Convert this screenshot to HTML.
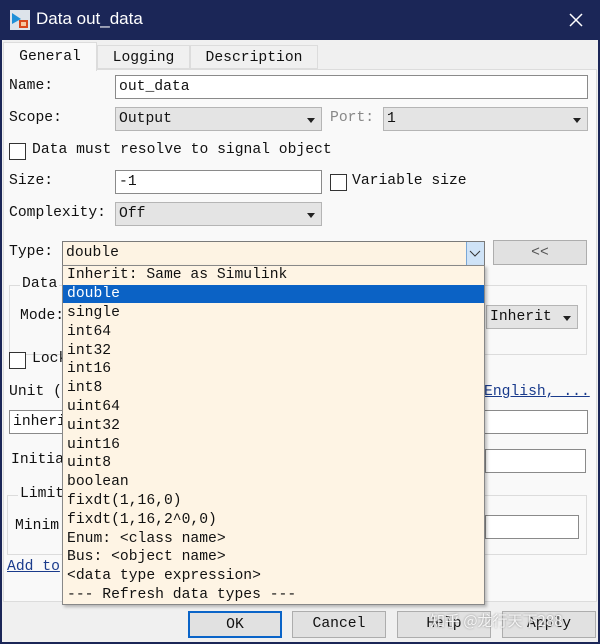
<!DOCTYPE html>
<html><head><meta charset="utf-8"><style>
*{box-sizing:border-box;margin:0;padding:0}
body{width:600px;height:644px;overflow:hidden;background:#f0f0f0;font-family:"Liberation Mono","Noto Sans CJK SC",monospace;font-size:14.7px;color:#111;position:relative}
.a{position:absolute;white-space:nowrap}
.title{left:0;top:0;width:600px;height:40px;background:#1b2657;color:#fff;font-family:"Liberation Sans",sans-serif;font-size:17px}
.inp{background:#fff;border:1px solid #8a8a8a;height:24px;padding:2px 3px;line-height:19px}
.dd{background:#e4e4e4;border:1px solid #b5b5b5;height:24px;padding:2px 3px;line-height:19px}
.dd:after{content:"";position:absolute;right:6px;top:10px;border:4px solid transparent;border-top:5px solid #222;border-bottom:0}
.cb{width:17px;height:17px;border:1px solid #333;background:#fff}
.grp{border:1px solid #dcdcdc}
.btn{background:#e1e1e1;border:1px solid #adadad;height:27px;text-align:center;line-height:24px}
.li{position:absolute;left:4px;height:19px;line-height:18px}
</style></head><body>
<div class="a title">
 <svg class="a" style="left:10px;top:10px" width="20" height="20"><rect x="0" y="0" width="20" height="20" fill="#dde3ea"/><path d="M2 3 L11 9 L2 14Z" fill="#1f8fd8"/><rect x="9" y="10" width="9" height="8" fill="#d9481c"/><rect x="11" y="12" width="5" height="4" fill="#f7c7a0"/></svg>
 <span class="a" style="left:36px;top:9px">Data out_data</span>
 <svg class="a" style="left:569px;top:13px" width="14" height="14"><path d="M1 1L13 13M13 1L1 13" stroke="#fff" stroke-width="1.5"/></svg>
</div>
<div class="a" style="left:0;top:40px;width:600px;height:604px;border-left:2px solid #1b2657;border-right:2px solid #1b2657;border-bottom:2px solid #1b2657"></div>
<div class="a" style="left:3px;top:69px;width:594px;height:533px;background:#f9f9f9;border:1px solid #dcdcdc"></div>
<div class="a" style="left:3px;top:42px;width:94px;height:29px;background:#f9f9f9;border:1px solid #dcdcdc;border-bottom:0;text-align:center;line-height:28px">General</div>
<div class="a" style="left:97px;top:45px;width:93px;height:24px;background:#f0f0f0;border:1px solid #dcdcdc;text-align:center;line-height:24px">Logging</div>
<div class="a" style="left:190px;top:45px;width:128px;height:24px;background:#f0f0f0;border:1px solid #dcdcdc;text-align:center;line-height:24px">Description</div>

<span class="a" style="left:9px;top:78px">Name:</span>
<div class="a inp" style="left:115px;top:75px;width:473px">out_data</div>
<span class="a" style="left:9px;top:110px">Scope:</span>
<div class="a dd" style="left:115px;top:107px;width:207px">Output</div>
<span class="a" style="left:330px;top:110px;color:#888">Port:</span>
<div class="a dd" style="left:383px;top:107px;width:205px">1</div>
<div class="a cb" style="left:9px;top:143px"></div>
<span class="a" style="left:32px;top:142px">Data must resolve to signal object</span>
<span class="a" style="left:9px;top:173px">Size:</span>
<div class="a inp" style="left:115px;top:170px;width:207px">-1</div>
<div class="a cb" style="left:330px;top:174px"></div>
<span class="a" style="left:352px;top:173px">Variable size</span>
<span class="a" style="left:9px;top:205px">Complexity:</span>
<div class="a dd" style="left:115px;top:202px;width:207px">Off</div>

<span class="a" style="left:9px;top:244px">Type:</span>
<div class="a" style="left:62px;top:241px;width:423px;height:25px;background:#fdf3e3;border:1px solid #7a7a7a;padding:2px 3px;line-height:19px">double</div>
<div class="a" style="left:466px;top:242px;width:18px;height:23px;background:#cfe3f7;border-left:1px solid #7aa7d6"></div>
<svg class="a" style="left:469px;top:250px" width="12" height="8"><path d="M1 1L6 6L11 1" stroke="#333" fill="none"/></svg>
<div class="a btn" style="left:493px;top:240px;width:94px;height:25px;color:#555">&lt;&lt;</div>

<div class="a grp" style="left:9px;top:285px;width:578px;height:70px"></div>
<span class="a" style="left:20px;top:276px;background:#f9f9f9;padding:0 2px">Data</span>
<span class="a" style="left:20px;top:308px">Mode:</span>
<div class="a dd" style="left:486px;top:305px;width:92px">Inherit</div>
<div class="a cb" style="left:9px;top:352px"></div>
<span class="a" style="left:32px;top:351px">Lock</span>
<span class="a" style="left:9px;top:384px">Unit (</span>
<span class="a" style="left:484px;top:384px;color:#1a3b8c;text-decoration:underline">English, ...</span>
<div class="a inp" style="left:9px;top:410px;width:579px">inherit</div>
<span class="a" style="left:11px;top:452px">Initia</span>
<div class="a inp" style="left:485px;top:449px;width:101px"></div>
<div class="a grp" style="left:7px;top:495px;width:580px;height:60px"></div>
<span class="a" style="left:18px;top:486px;background:#f9f9f9;padding:0 2px">Limit</span>
<span class="a" style="left:15px;top:518px">Minim</span>
<div class="a inp" style="left:485px;top:515px;width:94px"></div>
<span class="a" style="left:7px;top:559px;color:#1a3b8c;text-decoration:underline">Add to</span>

<div class="a" style="left:62px;top:265px;width:423px;height:340px;background:#fef4e4;border:1px solid #888;box-shadow:2px 2px 3px rgba(0,0,0,.25)">
 <div class="li" style="top:0">Inherit: Same as Simulink</div>
 <div class="a" style="left:0;top:19px;width:421px;height:18px;background:#0b62c5"></div>
 <div class="li" style="top:19px;color:#fff">double</div>
 <div class="li" style="top:38px">single</div>
 <div class="li" style="top:57px">int64</div>
 <div class="li" style="top:76px">int32</div>
 <div class="li" style="top:94px">int16</div>
 <div class="li" style="top:113px">int8</div>
 <div class="li" style="top:132px">uint64</div>
 <div class="li" style="top:151px">uint32</div>
 <div class="li" style="top:170px">uint16</div>
 <div class="li" style="top:188px">uint8</div>
 <div class="li" style="top:207px">boolean</div>
 <div class="li" style="top:226px">fixdt(1,16,0)</div>
 <div class="li" style="top:245px">fixdt(1,16,2^0,0)</div>
 <div class="li" style="top:264px">Enum: &lt;class name&gt;</div>
 <div class="li" style="top:282px">Bus: &lt;object name&gt;</div>
 <div class="li" style="top:301px">&lt;data type expression&gt;</div>
 <div class="li" style="top:320px">--- Refresh data types ---</div>
</div>

<div class="a btn" style="left:188px;top:611px;width:94px;border:2px solid #0a64c8">OK</div>
<div class="a btn" style="left:292px;top:611px;width:94px">Cancel</div>
<div class="a btn" style="left:397px;top:611px;width:94px">Help</div>
<div class="a btn" style="left:502px;top:611px;width:94px">Apply</div>
<span class="a" style="left:430px;top:610px;color:rgba(255,255,255,.85);font-family:'Noto Sans CJK SC',sans-serif;font-size:15px;text-shadow:0 0 2px #888">知乎 @龙行天下288</span>
</body></html>
